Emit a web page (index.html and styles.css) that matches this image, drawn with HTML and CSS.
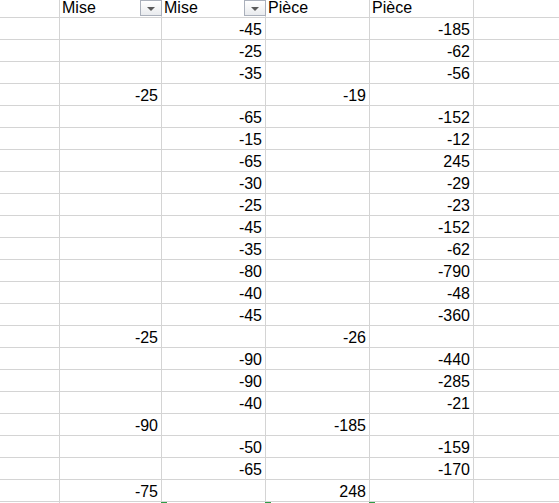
FILE: index.html
```html
<!DOCTYPE html>
<html>
<head>
<meta charset="utf-8">
<link rel="stylesheet" href="styles.css">
</head>
<body>
<div class="sheet">
  <div class="c hdr"></div>
  <div class="c hdr"><span>Mise</span><span class="dd"><span class="tri"></span></span></div>
  <div class="c hdr"><span>Mise</span><span class="dd"><span class="tri"></span></span></div>
  <div class="c hdr"><span>Pièce</span></div>
  <div class="c hdr"><span>Pièce</span></div>
  <div class="c hdr"></div>

  <div class="c"></div><div class="c n"></div><div class="c n">-45</div><div class="c n"></div><div class="c n">-185</div><div class="c"></div>
  <div class="c"></div><div class="c n"></div><div class="c n">-25</div><div class="c n"></div><div class="c n">-62</div><div class="c"></div>
  <div class="c"></div><div class="c n"></div><div class="c n">-35</div><div class="c n"></div><div class="c n">-56</div><div class="c"></div>
  <div class="c"></div><div class="c n">-25</div><div class="c n"></div><div class="c n">-19</div><div class="c n"></div><div class="c"></div>
  <div class="c"></div><div class="c n"></div><div class="c n">-65</div><div class="c n"></div><div class="c n">-152</div><div class="c"></div>
  <div class="c"></div><div class="c n"></div><div class="c n">-15</div><div class="c n"></div><div class="c n">-12</div><div class="c"></div>
  <div class="c"></div><div class="c n"></div><div class="c n">-65</div><div class="c n"></div><div class="c n">245</div><div class="c"></div>
  <div class="c"></div><div class="c n"></div><div class="c n">-30</div><div class="c n"></div><div class="c n">-29</div><div class="c"></div>
  <div class="c"></div><div class="c n"></div><div class="c n">-25</div><div class="c n"></div><div class="c n">-23</div><div class="c"></div>
  <div class="c"></div><div class="c n"></div><div class="c n">-45</div><div class="c n"></div><div class="c n">-152</div><div class="c"></div>
  <div class="c"></div><div class="c n"></div><div class="c n">-35</div><div class="c n"></div><div class="c n">-62</div><div class="c"></div>
  <div class="c"></div><div class="c n"></div><div class="c n">-80</div><div class="c n"></div><div class="c n">-790</div><div class="c"></div>
  <div class="c"></div><div class="c n"></div><div class="c n">-40</div><div class="c n"></div><div class="c n">-48</div><div class="c"></div>
  <div class="c"></div><div class="c n"></div><div class="c n">-45</div><div class="c n"></div><div class="c n">-360</div><div class="c"></div>
  <div class="c"></div><div class="c n">-25</div><div class="c n"></div><div class="c n">-26</div><div class="c n"></div><div class="c"></div>
  <div class="c"></div><div class="c n"></div><div class="c n">-90</div><div class="c n"></div><div class="c n">-440</div><div class="c"></div>
  <div class="c"></div><div class="c n"></div><div class="c n">-90</div><div class="c n"></div><div class="c n">-285</div><div class="c"></div>
  <div class="c"></div><div class="c n"></div><div class="c n">-40</div><div class="c n"></div><div class="c n">-21</div><div class="c"></div>
  <div class="c"></div><div class="c n">-90</div><div class="c n"></div><div class="c n">-185</div><div class="c n"></div><div class="c"></div>
  <div class="c"></div><div class="c n"></div><div class="c n">-50</div><div class="c n"></div><div class="c n">-159</div><div class="c"></div>
  <div class="c"></div><div class="c n"></div><div class="c n">-65</div><div class="c n"></div><div class="c n">-170</div><div class="c"></div>
  <div class="c"></div><div class="c n">-75</div><div class="c n"></div><div class="c n">248</div><div class="c n"></div><div class="c"></div>

  <div class="c last"></div>
  <div class="c last"></div>
  <div class="c last"><span class="mark"></span></div>
  <div class="c last"><span class="mark"></span></div>
  <div class="c last"><span class="mark"></span></div>
  <div class="c last"></div>
</div>
</body>
</html>
```
FILE: styles.css
```css
html, body {
  margin: 0;
  padding: 0;
  background: #ffffff;
  overflow: hidden;
}

.sheet {
  width: 559px;
  height: 503px;
  display: grid;
  grid-template-columns: 59px 101px 103px 103px 103px 1fr;
  grid-template-rows: 17px repeat(22, 21px) 1fr;
  gap: 1px;
  background: #d4d4d4;
  font-family: "Liberation Sans", Arial, sans-serif;
  font-size: 16px;
  color: #000000;
  overflow: hidden;
}

.c {
  background: #ffffff;
  line-height: 17px;
  display: flex;
  align-items: flex-end;
  padding: 0 3px 1px 3px;
  white-space: nowrap;
  min-width: 0;
}

.n {
  justify-content: flex-end;
}

.hdr {
  justify-content: space-between;
  padding: 0 0 1px 2px;
  overflow: visible;
}

.dd {
  align-self: flex-start;
  box-sizing: border-box;
  width: 22px;
  height: 16px;
  margin-right: -1px;
  border: 1px solid #aab0bb;
  background: linear-gradient(#ffffff, #e9ebee);
  display: flex;
  align-items: center;
  justify-content: center;
  flex-shrink: 0;
}

.tri {
  width: 0;
  height: 0;
  border-left: 4px solid transparent;
  border-right: 4px solid transparent;
  border-top: 4px solid #5a5a5a;
  margin-top: 1px;
}

.last {
  padding: 0;
  align-items: flex-start;
}

.mark {
  display: block;
  width: 6px;
  height: 1px;
  margin-left: -1px;
  background: #2e9e48;
}
```
